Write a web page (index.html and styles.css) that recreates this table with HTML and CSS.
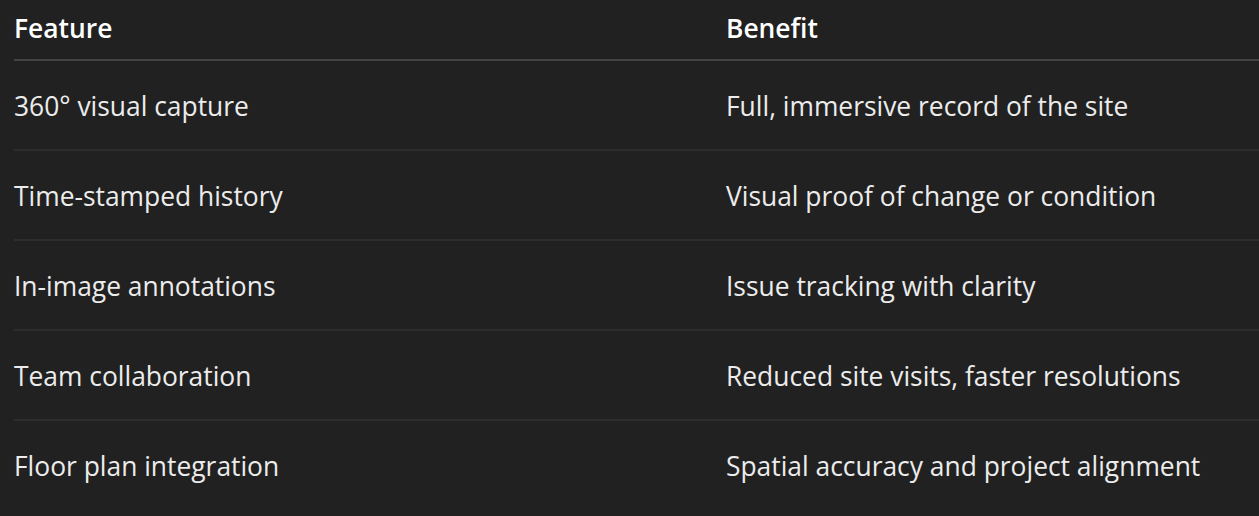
FILE: index.html
```html
<!DOCTYPE html>
<html lang="en">
<head>
<meta charset="utf-8">
<title>Features</title>
<link rel="stylesheet" href="styles.css">
</head>
<body>
<table class="grid">
  <thead>
    <tr class="head-row">
      <th class="col-feature">Feature</th>
      <th class="col-benefit">Benefit</th>
    </tr>
  </thead>
  <tbody>
    <tr class="row"><td>360° visual capture</td><td>Full, immersive record of the site</td></tr>
    <tr class="row"><td>Time-stamped history</td><td>Visual proof of change or condition</td></tr>
    <tr class="row"><td>In-image annotations</td><td>Issue tracking with clarity</td></tr>
    <tr class="row"><td>Team collaboration</td><td>Reduced site visits, faster resolutions</td></tr>
    <tr class="row"><td>Floor plan integration</td><td>Spatial accuracy and project alignment</td></tr>
  </tbody>
</table>
</body>
</html>
```

FILE: styles.css
```css
html, body {
  margin: 0;
  padding: 0;
  background: #212121;
}
body {
  font-family: "Open Sans", "Noto Sans", sans-serif;
  color: #ececec;
  overflow: hidden;
}
.grid {
  margin-left: 14px;
  width: 1300px;
  border-collapse: collapse;
  font-size: 26.4px;
}
.grid th,
.grid td {
  padding: 0;
  text-align: left;
  vertical-align: middle;
}
.col-feature {
  width: 712px;
}
.head-row th {
  height: 55px;
  padding-bottom: 4px;
  font-weight: 600;
  color: #ffffff;
  border-bottom: 2px solid #444444;
}
.row td {
  height: 86px;
  padding-top: 2px;
  border-bottom: 2px solid #2d2d2d;
}
.row:last-child td {
  border-bottom: none;
}
```
